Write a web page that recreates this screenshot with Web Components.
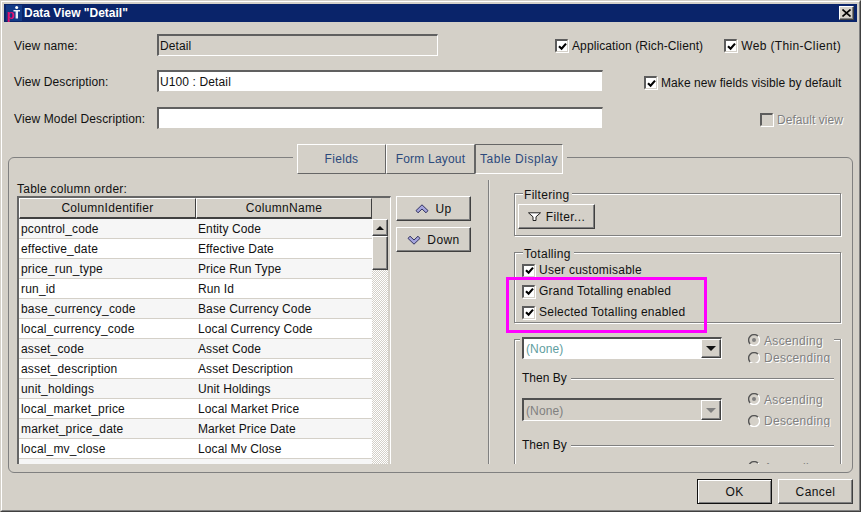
<!DOCTYPE html>
<html><head><meta charset="utf-8"><title>Data View</title>
<style>
html,body{margin:0;padding:0;background:#d4d0c8;font:12px/14px "Liberation Sans",Arial,sans-serif;color:#111}
</style>
<script>
const FONT='font:12px/14px "Liberation Sans",Arial,sans-serif;letter-spacing:.12px;';
function def(name,render){
  customElements.define(name,class extends HTMLElement{
    connectedCallback(){
      if(this.shadowRoot)return;
      const r=this.attachShadow({mode:'open'});
      r.innerHTML=render(this);
    }
  });
}
const attr=(e,n,d='')=>e.hasAttribute(n)?e.getAttribute(n):d;
const esc=s=>s.replace(/&/g,'&amp;').replace(/</g,'&lt;').replace(/"/g,'&quot;');

def('x-titlebar',e=>`<style>
:host{display:flex;align-items:center;height:18px;background:#0a246a;color:#fff;font:bold 12px/18px "Liberation Sans",Arial,sans-serif;letter-spacing:0}
svg{display:block;margin:0 2px 0 2px;flex:none}
.t{flex:1;white-space:nowrap}
.x{width:15px;height:14px;box-sizing:border-box;margin-right:3px;background:#d4d0c8;border:1px solid;border-color:#fff #404040 #404040 #fff;box-shadow:inset -1px -1px #808080;display:flex;align-items:center;justify-content:center}
.x svg{margin:0}
</style>
<svg width="16" height="18" viewBox="0 0 16 18"><rect x="0" y="1" width="16" height="16" fill="#123a86"/><text x="0.5" y="14.5" font-family="Liberation Sans" font-weight="bold" font-size="13" fill="#e0106e">p</text><circle cx="10.7" cy="3.5" r="1.5" fill="#fff"/><path d="M7.5 6h6.5v1.6h-2v6.9H9.6V7.6H7.5z" fill="#e8eef8"/></svg>
<div class="t">${esc(attr(e,'heading'))}</div>
<div class="x"><svg width="9" height="8" viewBox="0 0 9 8"><path d="M.5.5l8 7M8.5.5l-8 7" stroke="#000" stroke-width="1.6"/></svg></div>`);

def('x-dialog',e=>`<style>
:host{display:block;position:relative;width:861px;height:512px;box-sizing:border-box;background:#d4d0c8;border:1px solid;border-color:#d4d0c8 #404040 #404040 #d4d0c8;overflow:hidden;${FONT}}
.in{height:100%;box-sizing:border-box;border:1px solid;border-color:#fff #808080 #808080 #fff;padding:2px}
</style><div class="in"><x-titlebar heading="${esc(attr(e,'heading'))}"></x-titlebar><slot></slot></div>`);

def('x-row',e=>`<style>:host{display:flex;align-items:center;height:22px;padding-left:10px}</style><slot></slot>`);

def('x-label',e=>`<style>:host{display:block;white-space:nowrap;width:${attr(e,'w','143')}px;flex:none;padding-top:2px}</style><slot></slot>`);

def('x-field',e=>{const ro=e.hasAttribute('readonly');return `<style>
:host{display:block;flex:none;width:${attr(e,'w','445')}px;height:22px;box-sizing:border-box;border:2px solid;border-color:#606060 ${ro?'#fff':'#d4d0c8'} ${ro?'#fff':'#d4d0c8'} #606060;border-right-width:1px;border-bottom-width:1px;background:${ro?'#d4d0c8':'#fff'};padding-left:1px;line-height:20px;white-space:nowrap;overflow:hidden}
</style><slot></slot>`});

const CHECK='<svg width="9" height="9" viewBox="0 0 9 9"><path d="M1 4.2l2.6 2.6L8 1.6" fill="none" stroke="#000" stroke-width="2.1"/></svg>';
def('x-check',e=>{const c=e.hasAttribute('checked'),d=e.hasAttribute('disabled');return `<style>
:host{display:inline-flex;align-items:center;gap:4px;white-space:nowrap;flex:none;${d?'color:#808080;text-shadow:1px 1px 0 #fff;':''}}
.b{width:13px;height:13px;box-sizing:border-box;flex:none;border:2px solid;border-color:#5c5c5c #d4d0c8 #d4d0c8 #5c5c5c;border-right-width:1px;border-bottom-width:1px;background:${d?'#d4d0c8':'#fff'};display:flex;align-items:center;justify-content:center;box-shadow:1px 1px 0 #fff}
</style><div class="b">${c?CHECK:''}</div><slot></slot>`});

def('x-tab',e=>{const a=e.hasAttribute('active');return `<style>
:host{display:flex;align-items:center;justify-content:center;box-sizing:border-box;width:${attr(e,'w','89')}px;height:30px;color:#2c4a7c;border:1px solid;border-color:${a?'#666 #fff #fff #666':'#fff #666 #666 #fff'};white-space:nowrap;letter-spacing:.3px;flex:none}
</style><slot></slot>`});

def('x-tabstrip',e=>`<style>:host{display:flex;width:fit-content;margin:-14px 0 0 284px;padding:0 4px;background:#d4d0c8}</style><slot></slot>`);

def('x-panel',e=>`<style>
:host{display:block;margin:28px 4px 0;height:316px;box-sizing:border-box;border:1px solid #808080;border-radius:6px}
.b{display:flex;height:290px;overflow:hidden}
</style><slot name="tabs"></slot><div class="b"><slot></slot></div>`);

def('x-left',e=>`<style>
:host{display:block;width:471px;padding-left:8px;flex:none}
.l{height:22px;box-sizing:border-box;padding-top:8px;white-space:nowrap;letter-spacing:.25px}
.r{display:flex;gap:5px}
</style><div class="l">${esc(attr(e,'label'))}</div><div class="r"><slot></slot></div>`);

def('x-divider',e=>`<style>:host{display:block;flex:none;width:1px;margin-top:6px;background:#808080;box-shadow:1px 0 0 #e8e6e2}</style>`);

def('x-right',e=>`<style>:host{display:block;flex:1;min-width:0;padding:19px 11px 0 25px}</style><slot></slot>`);

def('x-scrollbar',e=>`<style>
:host{display:block;flex:none;width:16px;height:400px;background:repeating-conic-gradient(#fff 0 25%,#d4d0c8 0 50%) 0 0/2px 2px}
.u,.t{box-sizing:border-box;width:16px;background:#d4d0c8;border:1px solid;border-color:#fff #404040 #404040 #fff;box-shadow:inset -1px -1px #808080}
.u{height:17px;display:flex;align-items:center;justify-content:center}
.t{height:34px}
i{display:block;width:0;height:0;border:4px solid transparent;border-top:0;border-bottom:4px solid #111}
</style><div class="u"><i></i></div><div class="t"></div>`);

def('x-table',e=>`<style>
:host{display:block;flex:none;width:374px;height:300px;box-sizing:border-box;border:2px solid;border-color:#666 #fff #fff #666;border-right-width:1px;background:#d4d0c8;overflow:hidden}
.h{display:flex;height:21px}
.c{box-sizing:border-box;height:21px;background:#d4d0c8;border:1px solid;border-color:#fff #404040 #404040 #fff;border-bottom-width:2px;text-align:center;line-height:19px;white-space:nowrap;letter-spacing:.3px}
.b{display:flex}
.rows{width:353px;flex:none}
</style><div class="h"><div class="c" style="width:177px">${esc(attr(e,'a'))}</div><div class="c" style="width:176px">${esc(attr(e,'b'))}</div></div>
<div class="b"><div class="rows"><slot></slot></div><x-scrollbar></x-scrollbar></div>`);

def('x-tr',e=>`<style>
:host{display:flex;height:20px;box-sizing:border-box;border-bottom:1px solid #d4d0c8;line-height:21px;background:${e.hasAttribute('odd')?'#f6f6f6':'#fff'};white-space:nowrap}
.a{width:177px;padding-left:2px;box-sizing:border-box;letter-spacing:.18px}
.b{padding-left:2px;letter-spacing:.1px}
</style><div class="a">${esc(attr(e,'a'))}</div><div class="b">${esc(attr(e,'b'))}</div>`);

def('x-btn',e=>{const d=e.hasAttribute('default');return `<style>
:host{display:flex;align-items:center;justify-content:center;gap:${attr(e,'gap','6')}px;flex:none;box-sizing:border-box;width:${attr(e,'w','75')}px;height:25px;background:#d4d0c8;border:1px solid;border-color:${d?'#111':'#fff #404040 #404040 #fff'};box-shadow:${d?'inset 1px 1px #fff,inset -1px -1px #808080':'inset -1px -1px #808080'};white-space:nowrap;letter-spacing:.4px}
</style><slot></slot>`});

def('x-btncol',e=>`<style>:host{display:flex;flex-direction:column;gap:6px;flex:none}</style><slot></slot>`);

def('x-group',e=>{const l=attr(e,'legend');return `<style>
:host{display:block;box-sizing:border-box;height:${attr(e,'h','43')}px;margin-bottom:16px;border:1px solid #808080;box-shadow:inset 1px 1px #fff,1px 1px #fff;padding:0 0 0 ${attr(e,'pad','3')}px}
.l{width:fit-content;height:14px;line-height:16px;margin:-7px 0 0 ${8-+attr(e,'pad','3')}px;padding:0 3px 0 1px;background:#d4d0c8;white-space:nowrap;letter-spacing:.3px}
.c{margin-top:${attr(e,'gap','3')}px}
</style><div class="l">${esc(l)}</div><div class="c"><slot></slot></div>`});

def('x-stack',e=>`<style>:host{display:flex;flex-direction:column;align-items:flex-start;gap:7px;letter-spacing:.25px}</style><slot></slot>`);

def('x-sort',e=>`<style>
:host{display:block;box-sizing:border-box;height:200px;border:1px solid #808080;border-bottom:0;box-shadow:inset 1px 1px #fff,1px 0 #fff}
.w{margin:-6px 6px 0 5px;padding-left:2px;background:#d4d0c8;height:200px}
</style><div class="w"><slot></slot></div>`);

def('x-sortrow',e=>`<style>:host{display:flex;align-items:flex-start;height:${attr(e,'h','30')}px;overflow:hidden}
.c{margin-top:${attr(e,'ctop','3')}px;flex:none;width:200px}.r{margin-left:26px;display:flex;flex-direction:column;gap:${attr(e,'rgap','6')}px}
</style><div class="c"><slot name="combo"></slot></div><div class="r"><slot></slot></div>`);

def('x-combo',e=>{const d=e.hasAttribute('disabled');return `<style>
:host{display:flex;box-sizing:border-box;width:200px;height:${attr(e,'h','22')}px;border:2px solid;border-color:#505050 #fff #fff #505050;border-right-width:1px;border-bottom-width:1px;background:${d?'#d4d0c8':'#fff'};color:${d?'#808080':'#5f9ea0'}}
.t{flex:1;padding-left:2px;line-height:${+attr(e,'h','22')-1}px;white-space:nowrap;overflow:hidden}
.b{box-sizing:border-box;width:20px;background:#d4d0c8;border:1px solid;border-color:#fff #404040 #404040 #fff;box-shadow:inset -1px -1px #808080;display:flex;align-items:center;justify-content:center}
i{display:block;width:0;height:0;border:5px solid transparent;border-bottom:0;border-top:5px solid ${d?'#808080':'#111'}}
</style><div class="t"><slot></slot></div><div class="b"><i></i></div>`});

def('x-radio',e=>{const c=e.hasAttribute('checked');return `<style>
:host{display:flex;gap:4px;height:${attr(e,'h','12')}px;overflow:${e.hasAttribute('h')?'hidden':'visible'};color:#808080;text-shadow:1px 1px 0 #fff;white-space:nowrap;align-items:flex-start;line-height:${attr(e,'lh','15')}px;letter-spacing:.32px}
svg{display:block;flex:none}
</style><svg width="12" height="12" viewBox="0 0 12 12"><path d="M10 2.2A5.2 5.2 0 0 0 2.2 10" fill="none" stroke="#555" stroke-width="1.4"/><path d="M2.2 10A5.2 5.2 0 0 0 10 2.2" fill="none" stroke="#fff" stroke-width="1.4"/>${c?'<circle cx="6" cy="6" r="2" fill="#808080"/>':''}</svg><slot></slot>`});

def('x-thenby',e=>`<style>:host{display:flex;align-items:center;gap:4px;height:14px;white-space:nowrap;width:312px;letter-spacing:0}
.t{line-height:16px}
.l{flex:1;height:1px;background:#808080;box-shadow:0 1px #fff}</style><div class="t"><slot></slot></div><div class="l"></div>`);

def('x-footer',e=>`<style>:host{display:flex;justify-content:flex-end;gap:6px;margin-top:6px;padding-right:4px}</style><slot></slot>`);

def('x-highlight',e=>`<style>:host{display:block;position:absolute;left:505px;top:276px;width:201px;height:56px;box-sizing:border-box;border:3px solid #ff00ff;pointer-events:none}</style>`);
</script></head>
<body>
<x-dialog heading='Data View "Detail"'>
  <x-row style="margin-top:12px">
    <x-label>View name:</x-label><x-field readonly w="281">Detail</x-field>
    <x-check checked style="margin-left:117px;padding-top:1px;letter-spacing:.1px">Application (Rich-Client)</x-check>
    <x-check checked style="margin-left:21px;padding-top:1px;letter-spacing:.35px">Web (Thin-Client)</x-check>
  </x-row>
  <x-row style="margin-top:14px">
    <x-label>View Description:</x-label><x-field w="446">U100 : Detail</x-field>
    <x-check checked style="margin-left:41px;padding-top:3px;letter-spacing:.07px">Make new fields visible by default</x-check>
  </x-row>
  <x-row style="margin-top:15px">
    <x-label>View Model Description:</x-label><x-field w="446"></x-field>
    <x-check disabled style="margin-left:157px;padding-top:3px;letter-spacing:.05px">Default view</x-check>
  </x-row>
  <x-panel>
    <x-tabstrip slot="tabs"><x-tab>Fields</x-tab><x-tab style="letter-spacing:.2px">Form Layout</x-tab><x-tab active w="88" style="letter-spacing:.5px">Table Display</x-tab></x-tabstrip>
    <x-left label="Table column order:">
      <x-table a="ColumnIdentifier" b="ColumnName">
        <x-tr odd a="pcontrol_code" b="Entity Code"></x-tr>
        <x-tr a="effective_date" b="Effective Date"></x-tr>
        <x-tr odd a="price_run_type" b="Price Run Type"></x-tr>
        <x-tr a="run_id" b="Run Id"></x-tr>
        <x-tr odd a="base_currency_code" b="Base Currency Code"></x-tr>
        <x-tr a="local_currency_code" b="Local Currency Code"></x-tr>
        <x-tr odd a="asset_code" b="Asset Code"></x-tr>
        <x-tr a="asset_description" b="Asset Description"></x-tr>
        <x-tr odd a="unit_holdings" b="Unit Holdings"></x-tr>
        <x-tr a="local_market_price" b="Local Market Price"></x-tr>
        <x-tr odd a="market_price_date" b="Market Price Date"></x-tr>
        <x-tr a="local_mv_close" b="Local Mv Close"></x-tr>
        <x-tr odd a="" b=""></x-tr>
      </x-table>
      <x-btncol>
        <x-btn><svg width="14" height="10" viewBox="0 0 14 10"><path d="M7 .8L13 6.6 11 8.8 7 5 3 8.8 1 6.6z" fill="#a4a4dc" stroke="#333360" stroke-width="1"/></svg>Up</x-btn>
        <x-btn><svg width="14" height="10" viewBox="0 0 14 10"><path d="M7 9.2L13 3.4 11 1.2 7 5 3 1.2 1 3.4z" fill="#a4a4dc" stroke="#333360" stroke-width="1"/></svg>Down</x-btn>
      </x-btncol>
    </x-left>
    <x-divider></x-divider>
    <x-right>
      <x-group legend="Filtering" h="43" pad="3" gap="3">
        <x-btn w="77" gap="5"><svg width="13" height="9" viewBox="0 0 13 9"><path d="M.5.8h12L8 4.8V8.5H5V4.8z" fill="#fff" stroke="#222" stroke-width="1"/></svg>Filter...</x-btn>
      </x-group>
      <x-group legend="Totalling" h="71" pad="7" gap="3">
        <x-stack>
          <x-check checked>User customisable</x-check>
          <x-check checked>Grand Totalling enabled</x-check>
          <x-check checked>Selected Totalling enabled</x-check>
        </x-stack>
      </x-group>
      <x-sort>
        <x-sortrow>
          <x-combo slot="combo">(None)</x-combo>
          <x-radio checked>Ascending</x-radio>
          <x-radio h="11" lh="13">Descending</x-radio>
        </x-sortrow>
        <x-thenby style="margin-top:7px">Then By</x-thenby>
        <x-sortrow h="34" ctop="5" rgap="10" style="margin-top:8px">
          <x-combo slot="combo" disabled h="23">(None)</x-combo>
          <x-radio checked>Ascending</x-radio>
          <x-radio lh="13">Descending</x-radio>
        </x-sortrow>
        <x-thenby style="margin-top:11px">Then By</x-thenby>
        <x-sortrow h="14" ctop="0" style="margin-top:9px">
          <x-radio>Ascending</x-radio>
        </x-sortrow>
      </x-sort>
    </x-right>
  </x-panel>
  <x-footer>
    <x-btn default>OK</x-btn>
    <x-btn>Cancel</x-btn>
  </x-footer>
  <x-highlight></x-highlight>
</x-dialog>
</body></html>
